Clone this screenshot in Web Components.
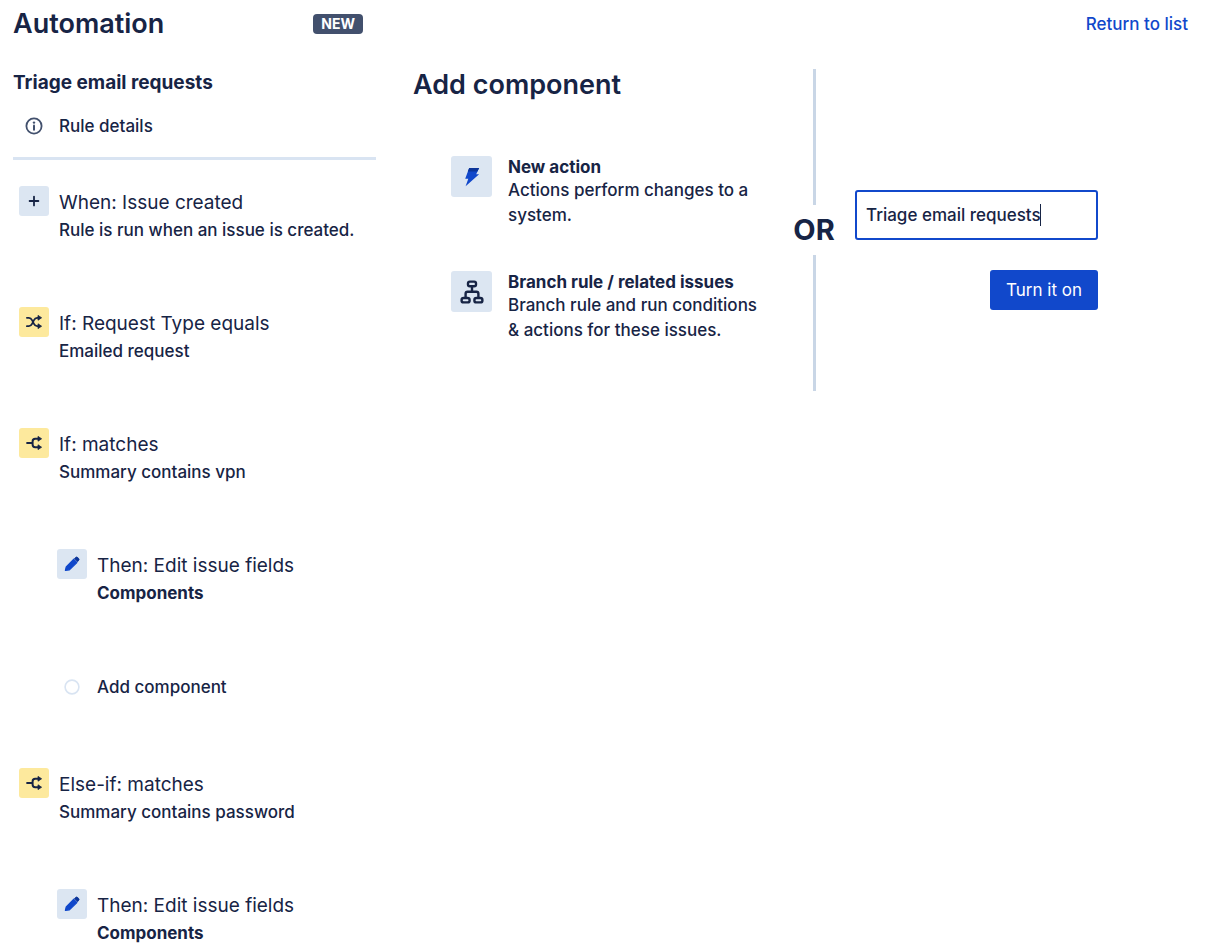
<!DOCTYPE html>
<html lang="en">
<head>
<meta charset="utf-8">
<meta name="viewport" content="width=device-width, initial-scale=1">
<title>Automation</title>
<style>
  :root {
    --ink: #172445;
    --blue: #1148cb;
    --tile-blue: #dce6f2;
    --tile-yellow: #fde99d;
    --line: #d9e4f2;
    --line-strong: #c9d6e6;
  }
  body {
    margin: 0;
    background: #fff;
    color: var(--ink);
    font: 500 17px/26px Inter, "Liberation Sans", sans-serif;
  }
</style>
</head>
<body>
<automation-app></automation-app>

<template id="t-app">
  <style>
    :host { display: block; padding: 0 21px 0 13px; }
    .body {
      display: grid;
      grid-template-columns: 363fr 775fr;
      column-gap: 37px;
      align-items: start;
      padding-top: 21px;
    }
    .steps { display: grid; row-gap: 64px; }
  </style>
  <app-header></app-header>
  <div class="body">
    <rule-sidebar>
      <span slot="name">Triage email requests</span>
      <div class="steps">
        <rule-step icon="plus"><span slot="title">When: Issue created</span>Rule is run when an issue is created.</rule-step>
        <rule-step icon="shuffle" tone="yellow"><span slot="title">If: Request Type equals</span>Emailed request</rule-step>
        <rule-step icon="branch" tone="yellow"><span slot="title">If: matches</span>Summary contains vpn</rule-step>
        <rule-step icon="pencil" nested strong><span slot="title">Then: Edit issue fields</span>Components</rule-step>
        <add-step>Add component</add-step>
        <rule-step icon="branch" tone="yellow"><span slot="title">Else-if: matches</span>Summary contains password</rule-step>
        <rule-step icon="pencil" nested strong><span slot="title">Then: Edit issue fields</span>Components</rule-step>
      </div>
    </rule-sidebar>
    <rule-builder></rule-builder>
  </div>
</template>

<template id="t-header">
  <style>
    :host { display: grid; grid-template-columns: 363fr 775fr; column-gap: 37px; align-items: center; height: 48px; }
    .left { display: flex; align-items: center; justify-content: space-between; padding-right: 13px; }
    h1 { margin: 0; font-size: 27px; line-height: 32px; font-weight: 600; }
    .badge {
      background: #42506d; color: #fff; border-radius: 4px;
      padding: 0 8px; font-size: 14px; line-height: 20px; font-weight: 700;
    }
    a { justify-self: end; color: var(--blue); text-decoration: none; }
  </style>
  <div class="left"><h1>Automation</h1><span class="badge">NEW</span></div>
  <a href="#list">Return to list</a>
</template>

<template id="t-sidebar">
  <style>
    :host { display: block; }
    h2 { margin: 0; font-size: 19px; line-height: 28px; font-weight: 700; }
    .details {
      display: flex; align-items: center; gap: 10px;
      padding: 16px 0 18px 6px; margin-bottom: 26px;
      border-bottom: 3px solid var(--line);
      color: inherit; text-decoration: none;
    }
    ui-icon { width: 30px; color: #42506d; }
  </style>
  <h2><slot name="name"></slot></h2>
  <a class="details" href="#details"><ui-icon name="info"></ui-icon>Rule details</a>
  <slot></slot>
</template>

<template id="t-step">
  <style>
    :host { display: flex; gap: 10px; padding-left: 6px; }
    :host([nested]) { padding-left: 44px; }
    .tile {
      flex: none; width: 30px; height: 30px; border-radius: 3px;
      display: grid; place-items: center; background: var(--tile-blue);
    }
    :host([tone="yellow"]) .tile { background: var(--tile-yellow); }
    .text { padding-top: 3px; }
    .title { font-size: 19px; line-height: 28px; font-weight: 400; }
    .sub { line-height: 26px; }
    :host([strong]) .sub { font-weight: 700; }
  </style>
  <div class="tile"><ui-icon></ui-icon></div>
  <div class="text">
    <div class="title"><slot name="title"></slot></div>
    <div class="sub"><slot></slot></div>
  </div>
</template>

<template id="t-add">
  <style>
    :host { display: block; padding-left: 44px; }
    button {
      display: flex; align-items: center; gap: 10px; height: 34px;
      border: 0; padding: 0; background: none; color: inherit; font: inherit; cursor: pointer;
    }
    ui-icon { width: 30px; color: var(--line); }
  </style>
  <button type="button"><ui-icon name="circle"></ui-icon><slot></slot></button>
</template>

<template id="t-builder">
  <style>
    :host { display: grid; grid-template-columns: 360fr 42px 333fr; column-gap: 20px; }
    h2 { margin: 0 0 55px; font-size: 27px; line-height: 32px; font-weight: 600; }
    .cards { display: grid; row-gap: 43px; padding-left: 38px; }
  </style>
  <section>
    <h2>Add component</h2>
    <div class="cards">
      <component-card icon="bolt"><span slot="title">New action</span>Actions perform changes to a system.</component-card>
      <component-card icon="tree"><span slot="title">Branch rule / related issues</span>Branch rule and run conditions &amp; actions for these issues.</component-card>
    </div>
  </section>
  <or-divider>OR</or-divider>
  <publish-form></publish-form>
</template>

<template id="t-card">
  <style>
    :host { display: flex; gap: 16px; padding-right: 12px; }
    .tile {
      flex: none; width: 41px; height: 41px; border-radius: 3px;
      display: grid; place-items: center; background: var(--tile-blue);
    }
    .title { font-weight: 700; line-height: 22px; }
    .desc { line-height: 25px; }
  </style>
  <div class="tile"><ui-icon></ui-icon></div>
  <div>
    <div class="title"><slot name="title"></slot></div>
    <div class="desc"><slot></slot></div>
  </div>
</template>

<template id="t-or">
  <style>
    :host { display: flex; flex-direction: column; align-items: center; min-height: 322px; font-size: 29px; line-height: 50px; font-weight: 700; }
    :host::before, :host::after { content: ""; flex: 1; width: 3px; background: var(--line-strong); }
  </style>
  <slot></slot>
</template>

<template id="t-form">
  <style>
    :host { display: block; padding-top: 121px; }
    form { display: flex; flex-direction: column; align-items: flex-end; gap: 30px; max-width: 243px; }
    .field { position: relative; width: 100%; }
    input {
      box-sizing: border-box; width: 100%; height: 50px; padding: 0 9px;
      border: 2px solid var(--blue); border-radius: 3px; outline: 0; background: #fff;
      color: inherit; font: inherit; caret-color: transparent;
    }
    .caret { position: absolute; left: 185px; top: 14px; width: 1px; height: 22px; background: var(--ink); }
    button {
      height: 40px; padding: 0 16px; border: 0; border-radius: 3px;
      background: var(--blue); color: #fff; font: inherit; font-weight: 400; cursor: pointer;
    }
  </style>
  <form>
    <div class="field">
      <input type="text" value="Triage email requests" aria-label="Rule name">
      <span class="caret" aria-hidden="true"></span>
    </div>
    <button type="button">Turn it on</button>
  </form>
</template>

<script>
  const ICONS = {
    info: [18, '<circle cx="9" cy="9" r="7.6" fill="none" stroke="currentColor" stroke-width="1.8"/><circle cx="9" cy="5.6" r="1.2" fill="currentColor"/><path d="M9 8.4v4.4" stroke="currentColor" stroke-width="2" stroke-linecap="round"/>'],
    plus: [16, '<path d="M8 3.6v8.8M3.6 8h8.8" stroke="currentColor" stroke-width="1.8" stroke-linecap="round"/>'],
    shuffle: [16, '<path d="M.9 3.8h2c1.6 0 2.5 1 3.3 2.6l1.6 3.2c.8 1.6 1.7 2.6 3.3 2.6h1.4M.9 12.2h2c1.6 0 2.5-1 3.3-2.6l1.6-3.2c.8-1.6 1.7-2.6 3.3-2.6h1.4" fill="none" stroke="currentColor" stroke-width="1.8" stroke-linecap="round"/><path d="M12 1.4 15.6 3.8 12 6.2zM12 9.8l3.6 2.4-3.6 2.4z" fill="currentColor" stroke="currentColor" stroke-width=".8" stroke-linejoin="round"/>'],
    branch: [16, '<path d="M1.1 8h5.3M12.5 3.8H9.2Q6.6 3.8 6.6 6.4v3.2q0 2.6 2.6 2.6h3.3" fill="none" stroke="currentColor" stroke-width="2" stroke-linecap="round"/><path d="M12 1.4 15.6 3.8 12 6.2zM12 9.8l3.6 2.4-3.6 2.4z" fill="currentColor" stroke="currentColor" stroke-width=".8" stroke-linejoin="round"/>'],
    pencil: [16, '<path d="M1.4 14.4 2.2 10.8 9.6 3.3 12.9 6.6 5.4 13.8z" fill="#1148cb" stroke="#1148cb" stroke-width="1.2" stroke-linejoin="round"/><path d="M10.3 2.7l.8-.8a2 2 0 0 1 3.1 0 2 2 0 0 1 0 3.1l-.8.8z" fill="#0c3599" stroke="#0c3599" stroke-width=".8" stroke-linejoin="round"/>'],
    circle: [16, '<circle cx="8" cy="8" r="6.9" fill="none" stroke="currentColor" stroke-width="1.6"/>'],
    bolt: [20, '<path d="M7.2.9h9.9l-2.9 6.3h2.9L3.6 19.2l2.7-7.4H3.2z" fill="#1148cb"/><path d="M7.2.9h9.9l-1.7 3.7H5.8z" fill="#0c3599"/>'],
    tree: [24, '<g fill="none" stroke="currentColor" stroke-width="2.4"><rect x="8" y="1.6" width="8" height="4.6" rx="1.8"/><rect x="1.6" y="18" width="8" height="4.4" rx="2"/><rect x="14.4" y="18" width="8" height="4.4" rx="2"/><path d="M12 6.4v5.4M5.6 18v-4.2q0-2 2-2h8.8q2 0 2 2V18"/></g>']
  };

  class Base extends HTMLElement {
    constructor() {
      super();
      this.attachShadow({ mode: 'open' })
        .append(document.getElementById(this.constructor.template).content.cloneNode(true));
    }
    connectedCallback() {
      const icon = this.getAttribute('icon');
      if (icon) this.shadowRoot.querySelector('ui-icon').setAttribute('name', icon);
    }
  }

  class UiIcon extends HTMLElement {
    static observedAttributes = ['name'];
    constructor() { super(); this.attachShadow({ mode: 'open' }); }
    attributeChangedCallback() {
      const [size, art] = ICONS[this.getAttribute('name')];
      this.shadowRoot.innerHTML =
        '<style>:host{display:grid;place-items:center;flex:none}svg{display:block}</style>' +
        `<svg width="${size}" height="${size}" viewBox="0 0 ${size} ${size}" aria-hidden="true">${art}</svg>`;
    }
  }
  customElements.define('ui-icon', UiIcon);

  const define = (name, template) =>
    customElements.define(name, class extends Base { static template = template; });
  define('app-header', 't-header');
  define('rule-sidebar', 't-sidebar');
  define('rule-step', 't-step');
  define('add-step', 't-add');
  define('component-card', 't-card');
  define('or-divider', 't-or');
  define('publish-form', 't-form');
  define('rule-builder', 't-builder');
  define('automation-app', 't-app');
</script>
</body>
</html>
